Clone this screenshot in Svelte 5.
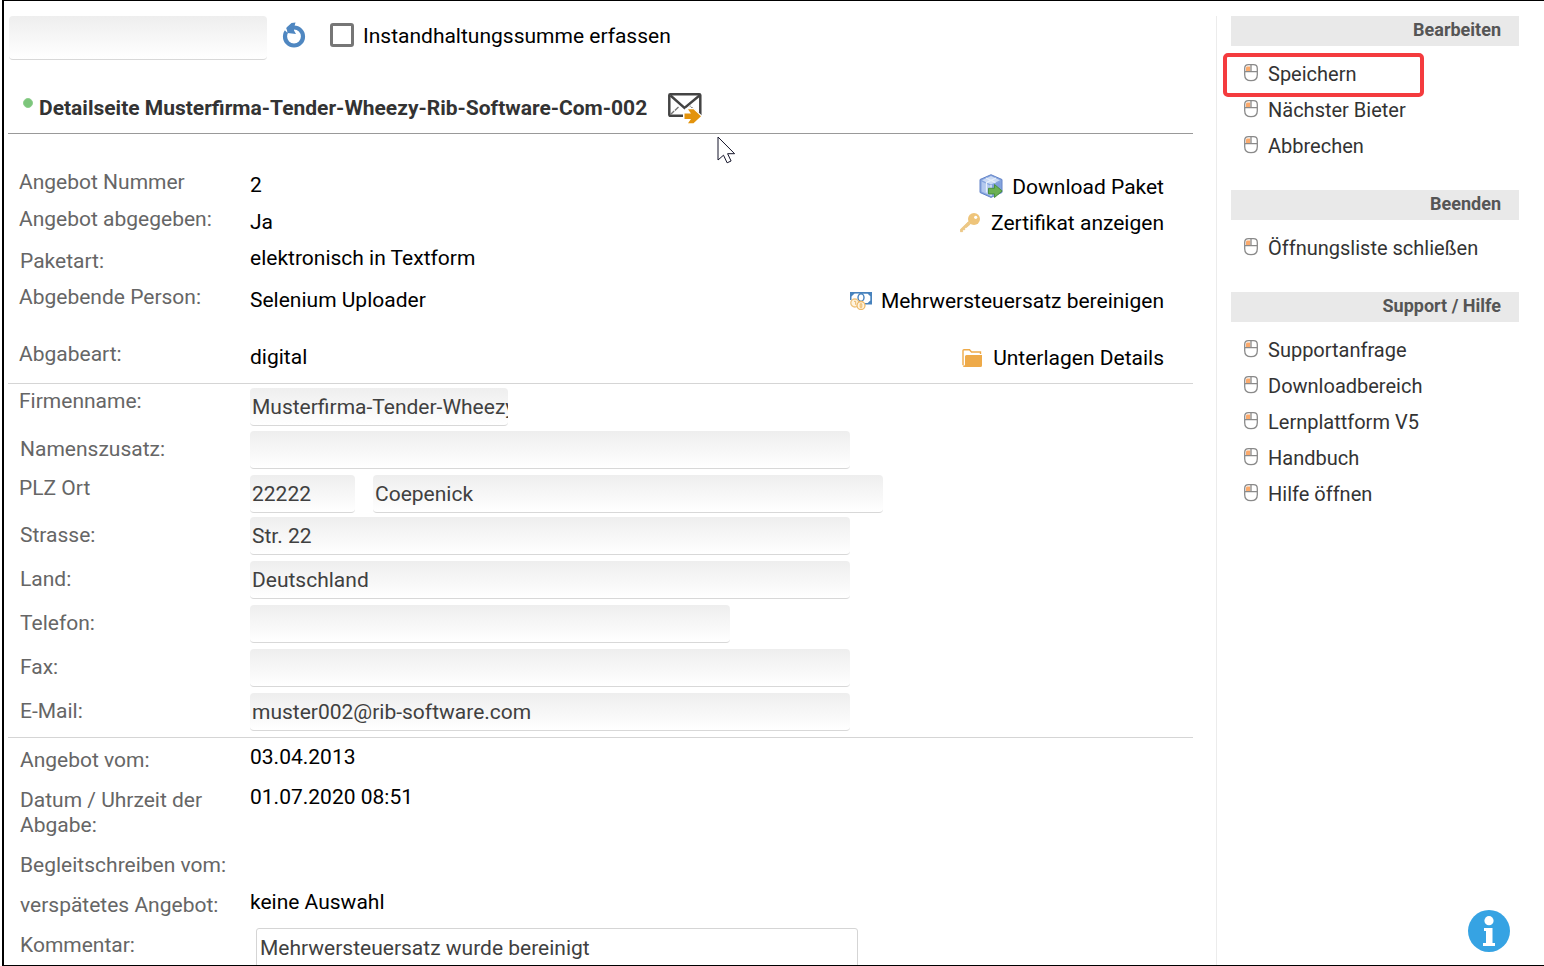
<script>
  const offerRows = [
    { label: 'Angebot Nummer', value: '2', kind: 'lead', action: 'Download Paket', icon: 'package' },
    { label: 'Angebot abgegeben:', value: 'Ja', kind: 'lead', action: 'Zertifikat anzeigen', icon: 'key' },
    { label: 'Paketart:', value: 'elektronisch in Textform', kind: 'low' },
    { label: 'Abgebende Person:', value: 'Selenium Uploader', kind: 'lead tall', action: 'Mehrwersteuersatz bereinigen', icon: 'money' },
    { label: 'Abgabeart:', value: 'digital', kind: 'lead last', action: 'Unterlagen Details', icon: 'folder' }
  ];
  const fieldRows = [
    { id: 'firma', label: 'Firmenname:', kind: 'lead', fields: [{ value: 'Musterfirma-Tender-Wheezy-Rib-Software-Com-002', size: 'name' }] },
    { id: 'zusatz', label: 'Namenszusatz:', fields: [{ value: '', size: 'full' }] },
    { id: 'plz', label: 'PLZ Ort', kind: 'lead', fields: [{ value: '22222', size: 'zip' }, { value: 'Coepenick', size: 'city', name: 'Ort' }] },
    { id: 'strasse', label: 'Strasse:', fields: [{ value: 'Str. 22', size: 'full' }] },
    { id: 'land', label: 'Land:', fields: [{ value: 'Deutschland', size: 'full' }] },
    { id: 'telefon', label: 'Telefon:', fields: [{ value: '', size: 'phone' }] },
    { id: 'fax', label: 'Fax:', fields: [{ value: '', size: 'full' }] },
    { id: 'email', label: 'E-Mail:', fields: [{ value: 'muster002@rib-software.com', size: 'full' }] }
  ];
  const dateRows = [
    { label: 'Angebot vom:', value: '03.04.2013' },
    { label: 'Datum / Uhrzeit der Abgabe:', value: '01.07.2020 08:51' },
    { label: 'Begleitschreiben vom:', value: '' },
    { label: 'verspätetes Angebot:', value: 'keine Auswahl' }
  ];
  const menus = [
    { title: 'Bearbeiten', items: ['Speichern', 'Nächster Bieter', 'Abbrechen'] },
    { title: 'Beenden', items: ['Öffnungsliste schließen'] },
    { title: 'Support / Hilfe', items: ['Supportanfrage', 'Downloadbereich', 'Lernplattform V5', 'Handbuch', 'Hilfe öffnen'] }
  ];
  let comment = 'Mehrwersteuersatz wurde bereinigt';
</script>

{#snippet icon(name)}
  {#if name === 'package'}
    <svg width="24" height="24" viewBox="0 0 24 24" aria-hidden="true">
      <path d="M12 .7 23 5.5v13L12 23.4 1 18.5v-13z" fill="#86a5de" stroke="#6484c8" />
      <path d="M12 2 21 6.3 12 10.5 3 6.3z" fill="#cbdaf4" />
      <path d="M2.600 7.500 11 11.400v10L2.600 17.600z" fill="#b3c8ee" />
      <path d="M13 11.400 21.400 7.500v10L13 21.400z" fill="#7f9fdd" />
      <path d="M7 4 16.500 8.600M17 4 7.500 8.600v10M12 11v11" fill="none" stroke="#e5eefb" stroke-width="1.300" />
      <path d="M9.500 14.300h6V10.500l7.700 6.500-7.700 6.500v-3.600h-6z" fill="#6bb053" stroke="#4b9040" />
    </svg>
  {:else if name === 'key'}
    <svg width="22" height="20" viewBox="0 0 22 20" aria-hidden="true">
      <path d="M8.500 8.500.3 16.500v2.200h2.300v-2h2.200v-2.200h1.700l3.700-3.300z" fill="#edc885" stroke="#e8bd73" stroke-width=".6" />
      <circle cx="14" cy="6" r="6" fill="#eec47a" />
      <circle cx="15.700" cy="4.300" r="1.600" fill="#fff" />
    </svg>
  {:else if name === 'money'}
    <svg width="22" height="18" viewBox="0 0 22 18" aria-hidden="true">
      <path d="M0 0h22v12.500H10V1.700H4.500L1.700 4.500V8H0z" fill="#4782bd" />
      <path d="M4.500 1.700h13.200l2.600 2.600v4.200l-2.600 2.400H11L1.700 8V4.500z" fill="#fff" />
      <ellipse cx="11" cy="5.500" rx="3" ry="3.800" fill="#fff" stroke="#4782bd" stroke-width="1.400" />
      <circle cx="4.800" cy="11" r="4" fill="#fff4df" stroke="#edc27d" stroke-width="1.300" />
      <circle cx="11" cy="13.500" r="4" fill="#fff4df" stroke="#edb968" stroke-width="1.300" />
      <path d="M4 9.300h1.700v3.500M10.200 11.800h1.600v3.500h-1.600z" fill="none" stroke="#eab766" />
    </svg>
  {:else if name === 'folder'}
    <svg width="22" height="18" viewBox="0 0 22 18" aria-hidden="true">
      <path d="M1 16V1.500Q1 .7 2 .7h5.500l2 2.300h9V5" fill="none" stroke="#eeaa49" stroke-width="1.400" />
      <path d="M4.500 6H20v10.500q0 1.500-1.500 1.500h-16Q1 18 .6 16.500h1.700Q3 16.500 3 15.500v-8Q3 6 4.500 6z" fill="#eeaa49" />
    </svg>
  {:else if name === 'mouse'}
    <svg width="14" height="20" viewBox="0 0 14 20" aria-hidden="true">
      <path d="M2.500 2.500h3.700v5H2V4z" fill="#fbaa6c" />
      <path d="M.7 4.500Q.7.700 4.500.7h5q3.800 0 3.800 3.800v6.200q0 6-6.300 6t-6.300-6zM.7 7.700h12.600M7 1v6.700" fill="none" stroke="#8a8a8a" stroke-width="1.300" />
    </svg>
  {/if}
{/snippet}

<div class="page">
  <main>
    <div class="toolbar">
      <input class="field search" type="text" aria-label="Suche" />
      <button class="plain reload" aria-label="Aktualisieren">
        <svg width="24" height="26" viewBox="0 0 24 26">
          <circle cx="12" cy="14.500" r="9" fill="none" stroke="#4f87c1" stroke-width="4.200" />
          <path d="M2 6 6 10" stroke="#fff" stroke-width="2" />
          <path d="M13.500.5 9.500 1 4.500 5.500l1 5.500 8.500 1-2-3.500V6z" fill="#4f87c1" />
        </svg>
      </button>
      <label class="check"><input type="checkbox" /><span>Instandhaltungssumme erfassen</span></label>
    </div>

    <header>
      <span class="dot"></span>
      <h1>Detailseite Musterfirma-Tender-Wheezy-Rib-Software-Com-002</h1>
      <button class="plain mail" aria-label="E-Mail senden">
        <svg width="34" height="32" viewBox="0 0 34 32">
          <rect x="1.300" y="2.300" width="31" height="21.500" rx="1" fill="#fff" stroke="#444" stroke-width="2.500" />
          <path d="M2.500 3.500 16.500 16 31.500 3.500" fill="none" stroke="#444" stroke-width="2.400" />
          <path d="M2.500 22.500 11 14.500M31.500 22.500 22 14" fill="none" stroke="#777" stroke-width="1.400" stroke-dasharray="5 1" />
          <path d="M16 21h7.500l-4-4h5.700l8.300 7.500-8.300 7.500h-5.700l4-4.300H16z" fill="#fff" stroke="#fff" stroke-width="2" />
          <path d="M16.500 21.500h6.500L20 17.300h5.500l7.500 7-7.500 7H20l3-4.200h-6.500z" fill="#e3930c" />
        </svg>
      </button>
      <svg class="pointer" width="19" height="28" viewBox="0 0 19 28" aria-hidden="true">
        <path d="M1 1v23l5.500-4.800 3.600 7.600 4-1.800-3.500-7.300h7z" fill="#fff" stroke="#15152a" />
      </svg>
    </header>

    <section class="offer">
      {#each offerRows as row}
        <div class="row {row.kind}">
          <span class="label">{row.label}</span>
          <span class="value">{row.value}</span>
          {#if row.action}
            <a class="action" href="#aktion">{@render icon(row.icon)}<span>{row.action}</span></a>
          {/if}
        </div>
      {/each}
    </section>

    <section class="address">
      {#each fieldRows as row}
        <div class="row {row.kind ?? ''}">
          <label class="label" for={row.id}>{row.label}</label>
          <div class="fields">
            {#each row.fields as f, i}
              <input class="field {f.size}" type="text" id={i ? row.id + i : row.id} aria-label={f.name} value={f.value} />
            {/each}
          </div>
        </div>
      {/each}
    </section>

    <section class="dates">
      {#each dateRows as row}
        <div class="row">
          <span class="label">{row.label}</span>
          <span class="value">{row.value}</span>
        </div>
      {/each}
      <div class="row">
        <label class="label" for="kommentar">Kommentar:</label>
        <textarea id="kommentar" rows="3" bind:value={comment}></textarea>
      </div>
    </section>
  </main>

  <aside>
    {#each menus as menu}
      <nav aria-label={menu.title}>
        <h2>{menu.title}</h2>
        <ul>
          {#each menu.items as item}
            <li class:marked={item === 'Speichern'}>
              <a href="#menu">{@render icon('mouse')}<span>{item}</span></a>
            </li>
          {/each}
        </ul>
      </nav>
    {/each}
  </aside>

  <button class="plain info" aria-label="Information">
    <svg width="42" height="42" viewBox="0 0 42 42">
      <circle cx="21" cy="21" r="21" fill="#36a3e3" />
      <circle cx="21" cy="10.700" r="4.600" fill="#fff" />
      <path d="M16 18h8.500v15H27v3H15v-3h3V21h-2z" fill="#fff" />
    </svg>
  </button>
</div>

<style>
  :global(body) {
    margin: 0;
    background: #fff;
  }
  *,
  *::after {
    box-sizing: border-box;
  }
  .page {
    position: relative;
    display: grid;
    grid-template-columns: minmax(0, 1fr) 303px;
    gap: 23px;
    height: 100vh;
    margin-left: 2px;
    padding: 15px 25px 0 4px;
    overflow: hidden;
    border: solid #000;
    border-width: 1px 0 1px 2px;
    font: 21px/25px Roboto, sans-serif;
    color: #000;
  }
  input,
  textarea,
  button {
    font: inherit;
    margin: 0;
  }
  a {
    color: inherit;
    text-decoration: none;
  }
  .plain {
    display: flex;
    padding: 0;
    border: 0;
    background: none;
  }
  .toolbar {
    display: flex;
    align-items: flex-start;
    height: 44px;
    padding-left: 1px;
  }
  .field {
    width: 100%;
    height: 38px;
    padding: 0 0 0 2px;
    border: 0;
    border-bottom: 1px solid #d8d8d8;
    border-radius: 4px;
    background: linear-gradient(#eeeeee, #fff);
    color: #404040;
  }
  .search {
    width: 258px;
    height: 44px;
  }
  .reload {
    margin: 6px 24px 0 15px;
  }
  .check {
    display: flex;
    align-items: flex-start;
    gap: 9px;
    padding-top: 7px;
  }
  .check span {
    padding-top: 1px;
  }
  .check input {
    appearance: none;
    width: 24px;
    height: 24px;
    border: 3px solid #767676;
    border-radius: 3px;
    background: #fff;
  }
  header {
    position: relative;
    display: flex;
    align-items: center;
    height: 74px;
    padding: 23px 0 0 15px;
    border-bottom: 1px solid #999;
  }
  .dot {
    width: 10px;
    height: 10px;
    margin: 0 6px 10px 0;
    border: 1px solid #8fd08e;
    border-radius: 50%;
    background: #7cc57b;
  }
  h1 {
    margin: 0 21px 0 0;
    font-size: 21px;
    line-height: 25px;
    color: #333;
  }
  .pointer {
    position: absolute;
    left: 709px;
    top: 76px;
  }
  .row {
    display: grid;
    grid-template-columns: 210px minmax(0, 1fr) auto;
    column-gap: 20px;
    padding: 0 29px 0 12px;
  }
  .label {
    color: #666;
  }
  .lead .label {
    margin-left: -1px;
  }
  section {
    border-bottom: 1px solid #d5d5d5;
  }
  .offer {
    padding-top: 32px;
  }
  .offer .row {
    min-height: 37px;
  }
  .offer .label {
    padding-top: 4px;
  }
  .value {
    padding-top: 7px;
  }
  .offer .low {
    min-height: 41px;
  }
  .low .label {
    padding-top: 9px;
  }
  .low .value {
    padding-top: 6px;
  }
  .offer .tall {
    min-height: 57px;
  }
  .offer .last {
    min-height: 45px;
  }
  .action {
    display: flex;
    align-items: center;
    align-self: start;
    gap: 9px;
    padding-top: 8px;
  }
  .action svg {
    margin-bottom: 2px;
  }
  .address {
    padding: 1px 0 3px;
  }
  .address .row {
    min-height: 44px;
    padding-top: 3px;
  }
  .address .lead {
    min-height: 43px;
  }
  .address .lead + .row + .lead {
    min-height: 42px;
  }
  .address .label {
    padding-top: 6px;
  }
  .address .lead .label {
    padding-top: 1px;
  }
  .fields {
    display: flex;
    gap: 18px;
  }
  .name {
    width: 258px;
  }
  .full {
    width: 600px;
  }
  .zip {
    width: 105px;
  }
  .city {
    width: 510px;
  }
  .phone {
    width: 480px;
  }
  .dates {
    border: 0;
  }
  .dates .row {
    min-height: 40px;
  }
  .dates .label {
    padding: 10px 0 5px;
  }
  textarea {
    display: block;
    width: 602px;
    margin: 5px 0 0 6px;
    padding: 7px 3px;
    border: 1px solid #d5d5d5;
    border-radius: 3px;
    color: #404040;
    resize: none;
  }
  aside {
    padding-left: 14px;
    border-left: 1px solid #ececec;
    font-size: 20px;
    color: #333;
  }
  nav {
    margin-bottom: 26px;
  }
  h2 {
    margin: 0 0 10px;
    padding: 0 18px 2px 0;
    background: #e9e9e9;
    font-size: 18px;
    line-height: 28px;
    text-align: right;
    color: #555;
  }
  ul {
    margin: 0;
    padding: 0;
    list-style: none;
  }
  li {
    position: relative;
  }
  li a {
    display: flex;
    align-items: center;
    gap: 10px;
    height: 36px;
    padding-left: 13px;
  }
  .marked::after {
    content: '';
    position: absolute;
    left: -8px;
    top: -3px;
    width: 201px;
    height: 44px;
    border: 4px solid #f43b3e;
    border-radius: 5px;
  }
  .info {
    position: absolute;
    right: 34px;
    bottom: 13px;
  }
</style>
